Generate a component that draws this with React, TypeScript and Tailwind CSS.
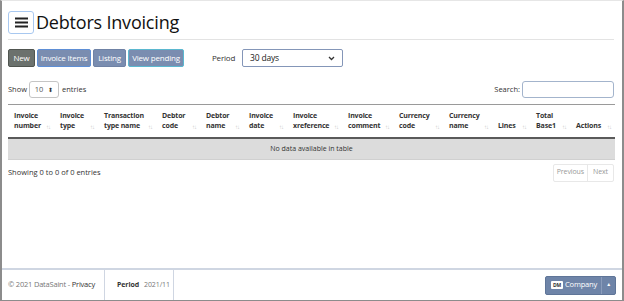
import React from "react";

const cols: { l1: string; l2?: string; w: number }[] = [
  { l1: "Invoice", l2: "number", w: 46 },
  { l1: "Invoice", l2: "type", w: 44 },
  { l1: "Transaction", l2: "type name", w: 58 },
  { l1: "Debtor", l2: "code", w: 44 },
  { l1: "Debtor", l2: "name", w: 43 },
  { l1: "Invoice", l2: "date", w: 44 },
  { l1: "Invoice", l2: "xreference", w: 55 },
  { l1: "Invoice", l2: "comment", w: 51 },
  { l1: "Currency", l2: "code", w: 50 },
  { l1: "Currency", l2: "name", w: 49 },
  { l1: "", l2: "Lines", w: 38 },
  { l1: "Total", l2: "Base1", w: 40 },
  { l1: "", l2: "Actions", w: 45 },
];

function SortIcon() {
  return (
    <span className="absolute right-[4px] bottom-[7px] text-[6px] leading-none text-[#c8c8c8] tracking-[-1px]">
      ↑↓
    </span>
  );
}

export default function App() {
  return (
    <div
      className="h-[301px] w-[624px] flex flex-col border-x-2 border-b border-t border-x-[#8c8c8c] border-b-[#8c8c8c] border-t-[#e6e6e6] bg-white text-[#212529] overflow-hidden"
      style={{ fontFamily: '"Open Sans", "Noto Sans", sans-serif' }}
    >
      <div className="flex-1 px-[6px]">
        {/* Header */}
        <div className="flex items-center pt-[9px] pb-[5px] border-b border-[#e3e3e3] mr-[2px]">
          <div className="w-[26px] h-[23px] border border-[#a8c8f0] rounded-[3px] flex items-center justify-center">
            <svg width="13" height="11" viewBox="0 0 13 11">
              <rect x="0" y="0.5" width="13" height="2" fill="#222" />
              <rect x="0" y="4.5" width="13" height="2" fill="#222" />
              <rect x="0" y="8.5" width="13" height="2" fill="#222" />
            </svg>
          </div>
          <h1 className="ml-[2px] text-[18px] leading-[24px] tracking-[-0.2px] text-[#111]">Debtors Invoicing</h1>
        </div>

        {/* Buttons */}
        <div className="flex items-center mt-[9px] text-[8px] tracking-[-0.2px]">
          <button className="w-[27px] h-[18px] text-white bg-[#6b716d] border border-[#505550] rounded-[2px]">New</button>
          <button className="ml-[2px] w-[54px] h-[18px] text-white bg-[#7a8db0] border border-[#5e8fd6] rounded-[2px] whitespace-nowrap">Invoice Items</button>
          <button className="ml-[2px] w-[33px] h-[18px] text-white bg-[#7a8db0] border border-[#6f82a5] rounded-[2px]">Listing</button>
          <button className="ml-[2px] w-[56px] h-[18px] text-white bg-[#7a8db0] border border-[#5bb8d0] rounded-[2px] whitespace-nowrap">View pending</button>
          <span className="ml-[28px] text-[#333]">Period</span>
          <div className="ml-[7px] w-[101px] h-[18px] border border-[#8496b8] rounded-[2px] flex items-center justify-between px-[7px]">
            <span className="text-[8.5px] text-[#222]">30 days</span>
            <svg width="7" height="5" viewBox="0 0 7 5">
              <path d="M1 1 L3.5 3.5 L6 1" stroke="#333" strokeWidth="1.3" fill="none" />
            </svg>
          </div>
        </div>

        {/* Show / Search */}
        <div className="flex items-center justify-between mt-[14px] mr-[2px]">
          <div className="flex items-center text-[7.5px] text-[#333]">
            <span>Show</span>
            <div className="ml-[2px] w-[30px] h-[17px] border border-[#c5c5c5] rounded-[3px] flex items-center justify-center gap-[5px]">
              <span className="text-[7.5px] text-[#555]">10</span>
              <span className="text-[6px] leading-none text-[#333]">⬍</span>
            </div>
            <span className="ml-[3px]">entries</span>
          </div>
          <div className="flex items-center text-[7.5px] text-[#333]">
            <span>Search:</span>
            <div className="ml-[2px] w-[92px] h-[17px] border border-[#a3b4cc] rounded-[3px]" />
          </div>
        </div>

        {/* Table */}
        <table className="mt-[6px] table-fixed border-collapse w-[607px]">
          <colgroup>
            {cols.map((c, i) => (
              <col key={i} style={{ width: c.w }} />
            ))}
          </colgroup>
          <thead>
            <tr className="border-t border-[#9a9a9a] border-b-2 border-b-[#5a5a5a]">
              {cols.map((c, i) => (
                <th key={i} className="relative text-left align-bottom font-bold text-[7px] leading-[10px] tracking-[-0.15px] text-[#333] pl-[6px] pr-[12px] pt-[6px] pb-[6px]">
                  {c.l1 && <div className="whitespace-nowrap">{c.l1}</div>}
                  <div className="whitespace-nowrap">{c.l2}</div>
                  <SortIcon />
                </th>
              ))}
            </tr>
          </thead>
          <tbody>
            <tr className="bg-[#dcdcdc]">
              <td colSpan={13} className="text-center text-[7px] text-[#333] h-[21px] border-b border-[#d0d0d0]">
                No data available in table
              </td>
            </tr>
          </tbody>
        </table>

        {/* Info / Pagination */}
        <div className="flex items-center justify-between mt-[4px] mr-[2px]">
          <span className="text-[7.5px] text-[#333]">Showing 0 to 0 of 0 entries</span>
          <div className="flex h-[18px] border border-[#e8e8e8] rounded-[2px] text-[7px] tracking-[-0.1px] text-[#999]">
            <span className="px-[3px] flex items-center border-r border-[#e8e8e8]">Previous</span>
            <span className="px-[5px] flex items-center">Next</span>
          </div>
        </div>
      </div>

      {/* Footer */}
      <div className="h-[32px] border-t-2 border-[#cfd6e2] flex items-stretch">
        <div className="w-[102px] flex items-center pl-[6px] text-[7.5px] tracking-[-0.2px] text-[#777] whitespace-nowrap">
          © 2021 DataSaint -&nbsp;<span className="text-[#333]">Privacy</span>
        </div>
        <div className="w-[70px] border-x border-[#cfd6e2] flex items-center pl-[12px] text-[7px] tracking-[-0.1px] whitespace-nowrap">
          <span className="font-bold text-[#333]">Period</span>
          <span className="ml-[5px] text-[#777]">2021/11</span>
        </div>
        <div className="flex-1 flex items-center justify-end pr-[6px]">
          <div className="flex h-[19px] rounded-[2px] bg-[#6e84a8] text-white text-[7.5px] tracking-[-0.2px] border border-[#5f7598]">
            <div className="flex items-center pl-[5px] pr-[4px]">
              <span className="bg-white text-[#333] text-[5px] font-bold leading-none px-[2px] py-[1.5px] rounded-[1px]">DM</span>
              <span className="ml-[2px]">Company</span>
            </div>
            <div className="border-l border-[#8a9cbb] w-[14px] flex items-center justify-center text-[5px]">▲</div>
          </div>
        </div>
      </div>
    </div>
  );
}
